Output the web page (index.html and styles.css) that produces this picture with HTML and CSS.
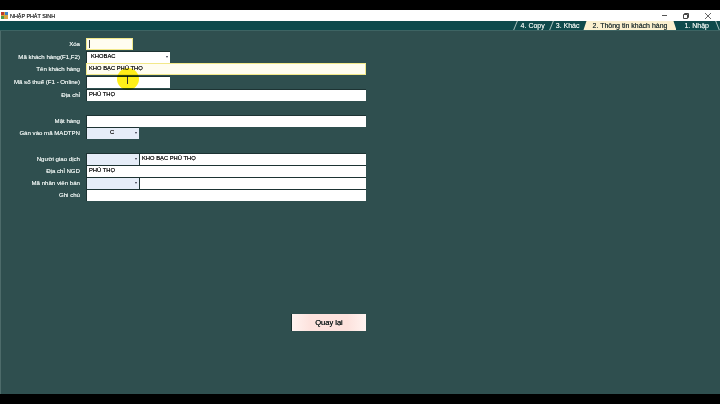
FILE: index.html
```html
<!DOCTYPE html>
<html lang="vi">
<head>
  <meta charset="UTF-8">
  <title>NHẬP PHÁT SINH</title>
  <link rel="stylesheet" href="styles.css">
</head>
<body>
  <div class="black-bar"></div>

  <!-- Thanh tieu de -->
  <div class="titlebar">
    <svg class="app-icon" width="7" height="7" viewBox="0 0 7 7">
      <rect width="7" height="7" fill="#d9a441"/>
      <rect x="0" y="0" width="3" height="3" fill="#c0392b"/>
      <rect x="4" y="0" width="3" height="3" fill="#3f7fc4"/>
      <rect x="0" y="4" width="3" height="3" fill="#4f9a4a"/>
    </svg>
    <span class="title">NHẬP PHÁT SINH</span>
    <div class="win-buttons">
      <svg width="5" height="5" viewBox="0 0 5 5"><path d="M0 2.5H5" stroke="#555" fill="none"/></svg>
      <svg width="6" height="6" viewBox="0 0 6 6"><path d="M.5 1.5H4.5V5.5H.5ZM1.5 1.5V.5H5.5V4.5H4.5" stroke="#444" fill="none"/></svg>
      <svg width="6" height="6" viewBox="0 0 6 6"><path d="M0 0L6 6M6 0L0 6" stroke="#666" fill="none"/></svg>
    </div>
  </div>

  <!-- Tab -->
  <div class="tabstrip">
    <div class="tab tab-copy">4. Copy</div>
    <div class="tab tab-khac">3. Khác</div>
    <div class="tab active">2. Thông tin khách hàng</div>
    <div class="tab tab-nhap">1. Nhập</div>
  </div>

  <div class="panel">
    <div class="form">
      <label>Xóa</label>
      <div class="row"><div class="field focus w-xs"><i class="caret"></i></div></div>

      <label>Mã khách hàng(F1,F2)</label>
      <div class="row"><div class="field combo w-md">KHOBAC<b></b></div></div>

      <label>Tên khách hàng</label>
      <div class="row"><div class="field focus w-full">KHO BẠC PHÚ THỌ</div></div>

      <label>Mã số thuế (F1 - Online)</label>
      <div class="row"><div class="field w-md"></div></div>

      <label>Địa chỉ</label>
      <div class="row"><div class="field w-full">PHÚ THỌ</div></div>
    </div>

    <div class="form">
      <label>Mặt hàng</label>
      <div class="row"><div class="field w-full"></div></div>

      <label>Gán vào mã MADTPN</label>
      <div class="row"><div class="field combo blue center w-sm">C<b></b></div></div>
    </div>

    <div class="form tight">
      <label>Người giao dịch</label>
      <div class="row">
        <div class="field combo blue w-sm"><b></b></div>
        <div class="field grow">KHO BẠC PHÚ THỌ</div>
      </div>

      <label>Địa chỉ NGD</label>
      <div class="row"><div class="field w-full">PHÚ THỌ</div></div>

      <label>Mã nhân viên bán</label>
      <div class="row">
        <div class="field combo blue w-sm"><b></b></div>
        <div class="field grow"></div>
      </div>

      <label>Ghi chú</label>
      <div class="row"><div class="field w-full"></div></div>
    </div>

    <div class="actions">
      <button class="back">Quay lại</button>
    </div>

    <!-- Vong tron con tro chuot -->
    <div class="cursor-spot"><span class="beam"></span></div>
  </div>

  <div class="black-bar"></div>
</body>
</html>
```

FILE: styles.css
```css
* { margin: 0; padding: 0; box-sizing: border-box; }
body {
  width: 720px;
  height: 404px;
  display: flex;
  flex-direction: column;
  background: #000;
  font-family: "Liberation Sans", Arial, sans-serif;
  overflow: hidden;
}
.black-bar { height: 10px; background: #000; flex: none; }

.titlebar {
  height: 11px;
  flex: none;
  background: #fff;
  display: flex;
  align-items: center;
  padding: 0 3px 0 1px;
  gap: 2px;
  color: #333;
  font-size: 5.4px;
  text-shadow: 0 0 .5px #333;
}
.win-buttons {
  margin-left: auto;
  display: flex;
  align-items: center;
  gap: 16px;
  padding-right: 6px;
}

.tabstrip {
  height: 10px;
  flex: none;
  background: #0e4a4c;
  display: flex;
  justify-content: flex-end;
  border-bottom: 1px solid #3d6463;
}
.tab {
  position: relative;
  color: #dfe9e6;
  font-size: 7px;
  line-height: 10px;
  white-space: nowrap;
  text-shadow: 0 0 .5px #dfe9e6;
}
.tab::before {
  content: "";
  position: absolute;
  left: 1px;
  top: 0;
  bottom: 0;
  border-left: 1px solid #a9c2bf;
  transform: skewX(-22deg);
}
.tab-copy { padding: 0 5px 0 7px; }
.tab-khac { padding: 0 4px 0 6px; }
.tab-nhap { padding: 0 11px 0 8px; }
.tab.active {
  background: #fbf0cf;
  color: #2c3a3a;
  padding: 0 9px;
  text-shadow: 0 0 .5px #2c3a3a;
  clip-path: polygon(3px 0, calc(100% - 3px) 0, 100% 100%, 0 100%);
}
.tab.active::before { display: none; }
.tab-nhap::before { left: auto; right: 2px; transform: skewX(22deg); }

.panel {
  position: relative;
  flex: 1;
  background: #2f4f4f;
  border-left: 1px solid #4d6b6a;
  display: flex;
  flex-direction: column;
  padding-top: 7px;
}
.form {
  display: grid;
  grid-template-columns: 79px 280px;
  grid-auto-rows: 12.6px;
  column-gap: 6px;
  align-items: center;
  margin-bottom: 13.5px;
}
.form.tight { grid-auto-rows: 12px; margin-bottom: 0; }
.form label {
  text-align: right;
  color: #e4ecea;
  font-size: 6.1px;
  padding-bottom: 1px;
  white-space: nowrap;
  text-shadow: 0 0 .5px #e4ecea;
}
.row { display: flex; height: 100%; align-items: center; }

.field {
  position: relative;
  height: 12px;
  background: #fff;
  border-left: 1px solid #1d3333;
  border-top: 1px solid #1d3333;
  color: #1a1a1a;
  font-size: 5.8px;
  line-height: 9.5px;
  padding-left: 2px;
  white-space: nowrap;
  text-shadow: 0 0 .4px #1a1a1a;
}
.tight .field { height: 11.5px; }
.field.focus {
  background: #fffdf0;
  border: 1px solid #f2e88a;
}
.w-xs { width: 47px; }
.w-sm { width: 53px; }
.w-md { width: 84px; }
.w-full { width: 280px; }
.grow { flex: 1; }
.combo { padding-left: 4px; }
.combo b {
  position: absolute;
  right: 2px;
  top: 4px;
  border-left: 1.5px solid transparent;
  border-right: 1.5px solid transparent;
  border-top: 2px solid #334;
}
.blue { background: #e6edf8; }
.center { text-align: center; padding-right: 6px; }
.caret {
  display: block;
  width: 1px;
  height: 8px;
  margin-top: 1px;
  background: #444;
}

.actions {
  margin-top: 113px;
  width: 365px;
  display: flex;
  justify-content: flex-end;
}
.back {
  width: 75px;
  height: 17px;
  border: none;
  border-left: 1px solid #17302f;
  background: linear-gradient(90deg, #fff3f0, #fde2dd 25%, #fde2dd 75%, #fff3f0);
  color: #111c1c;
  font-family: "Liberation Sans", Arial, sans-serif;
  font-size: 7.5px;
  text-shadow: 0 0 .4px #111c1c;
}

.cursor-spot {
  position: absolute;
  left: 116px;
  top: 37px;
  width: 22px;
  height: 22px;
  border-radius: 50%;
  background: rgba(255, 238, 0, 0.9);
  mix-blend-mode: multiply;
}
.beam {
  position: absolute;
  left: 10px;
  top: 8px;
  width: 1px;
  height: 8px;
  background: #333;
}
```
